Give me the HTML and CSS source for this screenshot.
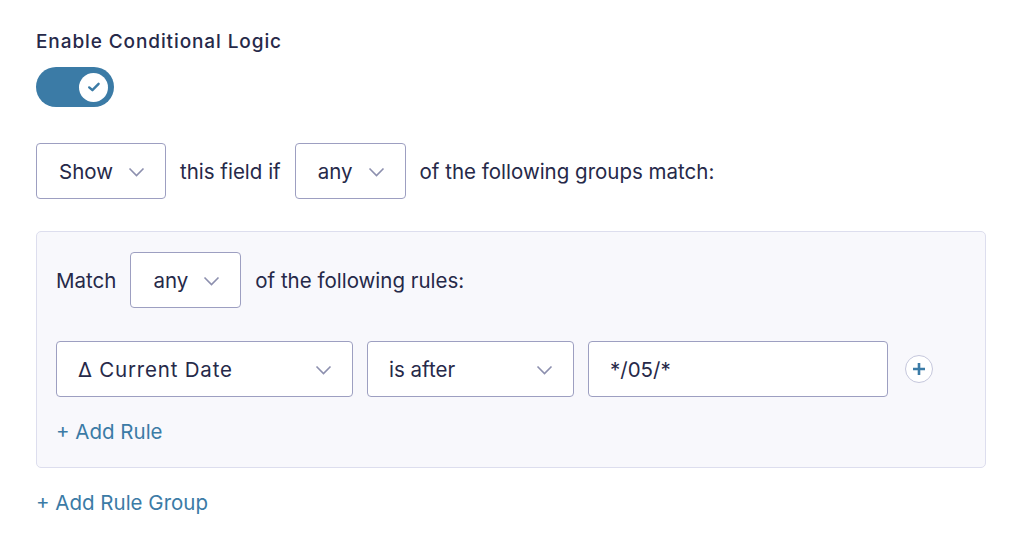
FILE: index.html
```html
<!DOCTYPE html>
<html lang="en">
<head>
    <meta charset="UTF-8">
    <meta name="viewport" content="width=device-width, initial-scale=1.0">
    <title>Conditional Logic</title>
    <link rel="stylesheet" href="styles.css">
</head>
<body>
    <div class="settings">
        <div class="label">Enable Conditional Logic</div>
        <div class="toggle">
            <span class="knob">
                <svg width="14" height="14" viewBox="0 0 14 14"><path d="M2.2 7.4 L5.4 10.2 L11.6 3.8" fill="none" stroke="#3b7ba6" stroke-width="2.4" stroke-linecap="round" stroke-linejoin="round"/></svg>
            </span>
        </div>

        <div class="line">
            <div class="select">Show <svg class="chev" width="17" height="10" viewBox="0 0 17 10"><path d="M1.5 1.5 L8.5 8.5 L15.5 1.5" fill="none" stroke="#8c8fae" stroke-width="1.6"/></svg></div>
            <span>this field if</span>
            <div class="select">any <svg class="chev" width="17" height="10" viewBox="0 0 17 10"><path d="M1.5 1.5 L8.5 8.5 L15.5 1.5" fill="none" stroke="#8c8fae" stroke-width="1.6"/></svg></div>
            <span>of the following groups match:</span>
        </div>

        <div class="group">
            <div class="line">
                <span>Match</span>
                <div class="select">any <svg class="chev" width="17" height="10" viewBox="0 0 17 10"><path d="M1.5 1.5 L8.5 8.5 L15.5 1.5" fill="none" stroke="#8c8fae" stroke-width="1.6"/></svg></div>
                <span>of the following rules:</span>
            </div>
            <div class="rule">
                <div class="select fixed w-field"><span class="field-name">Δ Current Date</span> <svg class="chev" width="17" height="10" viewBox="0 0 17 10"><path d="M1.5 1.5 L8.5 8.5 L15.5 1.5" fill="none" stroke="#8c8fae" stroke-width="1.6"/></svg></div>
                <div class="select fixed w-op">is after <svg class="chev" width="17" height="10" viewBox="0 0 17 10"><path d="M1.5 1.5 L8.5 8.5 L15.5 1.5" fill="none" stroke="#8c8fae" stroke-width="1.6"/></svg></div>
                <div class="select fixed w-value">*/05/*</div>
                <button class="add-btn">
                    <svg width="14" height="14" viewBox="0 0 14 14"><path d="M7 1 V13 M1 7 H13" stroke="#3b7ba6" stroke-width="2.6"/></svg>
                </button>
            </div>
            <a class="link add-rule" href="#">+ Add Rule</a>
        </div>

        <a class="link add-group" href="#">+ Add Rule Group</a>
    </div>
</body>
</html>
```

FILE: styles.css
```css
body {
    margin: 0;
    font-family: 'Inter', 'Noto Sans', sans-serif;
    color: #262949;
    background-color: white;
}
.settings {
    padding: 30px 36px 0 36px;
    width: 950px;
}
.label {
    font-size: 19px;
    font-weight: 500;
    letter-spacing: 0.9px;
    line-height: 24px;
}
.toggle {
    margin-top: 13px;
    width: 78px;
    height: 40px;
    border-radius: 20px;
    background-color: #3b7ba6;
    display: flex;
    align-items: center;
    justify-content: flex-end;
    padding-right: 6px;
    box-sizing: border-box;
}
.knob {
    width: 29px;
    height: 29px;
    border-radius: 50%;
    background-color: white;
    display: flex;
    align-items: center;
    justify-content: center;
}
.line {
    display: flex;
    align-items: center;
    gap: 14px;
    font-size: 20.5px;
}
.settings > .line {
    margin-top: 36px;
}
.select {
    height: 56px;
    box-sizing: border-box;
    border: 1px solid #9d9fc1;
    border-radius: 4px;
    background-color: white;
    display: flex;
    align-items: center;
    gap: 15px;
    padding: 0 20px 0 22px;
    font-size: 20.5px;
}
.select.fixed {
    justify-content: space-between;
    padding-left: 21px;
}
.field-name {
    letter-spacing: 0.8px;
}
.chev {
    margin-top: 2px;
}
.w-field { width: 297px; }
.w-op { width: 207px; }
.w-value { width: 300px; }
.group {
    margin-top: 32px;
    background-color: #f8f8fc;
    border: 1px solid #dddeee;
    border-radius: 5px;
    padding: 20px 19px 0 19px;
    height: 237px;
    box-sizing: border-box;
}
.rule {
    margin-top: 33px;
    display: flex;
    align-items: center;
    gap: 14px;
}
.add-btn {
    margin-left: 3px;
    width: 28px;
    height: 28px;
    border-radius: 50%;
    border: 1px solid #c5c7dc;
    background-color: white;
    display: flex;
    align-items: center;
    justify-content: center;
    padding: 0;
}
.link {
    color: #3b7ba6;
    text-decoration: none;
    font-size: 20.5px;
    display: inline-block;
}
.add-rule {
    margin-top: 22px;
}
.add-group {
    margin-top: 22px;
}
```
